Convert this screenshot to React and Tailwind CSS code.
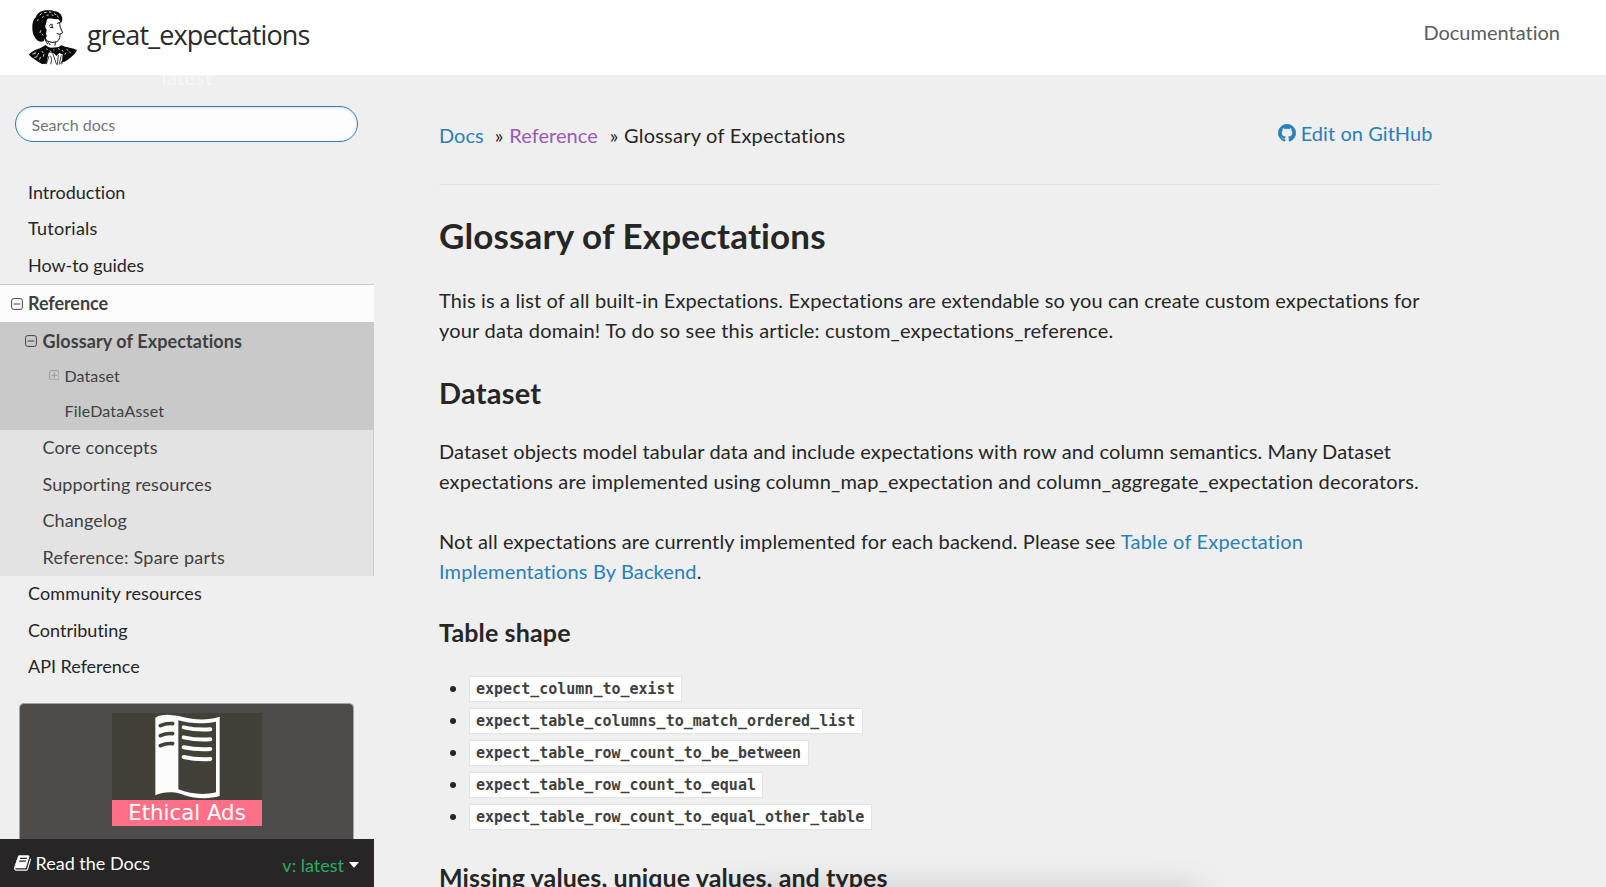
import React from 'react';

const commands = [
  'expect_column_to_exist',
  'expect_table_columns_to_match_ordered_list',
  'expect_table_row_count_to_be_between',
  'expect_table_row_count_to_equal',
  'expect_table_row_count_to_equal_other_table',
];

function Portrait() {
  return (
    <svg viewBox="0 0 210 225" className="h-[75px] w-[70px] shrink-0" aria-hidden="true">
      <path
        fill="#0a0a0a"
        d="M37 84c-1-14 3-26 11-33 3-12 18-20 33-20 9-1 18 0 24 3 11 1 19 8 21 18 2 7 1 13-4 18-1-6-4-10-8-13-9 2-20-2-31-1-4 5-3 11-6 18-3 4-1 10 3 15l-2 13c4 5 2 10-3 13l-4 9-9 1c-8-1-14-6-18-14-5-8-7-17-7-27z"
      />
      <path
        fill="#0a0a0a"
        d="M27 163c9-9 20-15 33-18l17-10c4 4 9 7 15 8l19-1c6-1 9-3 12-6 8 2 13 5 21 6 11 3 20 5 27 8-4 9-11 17-20 23-5 4-11 9-19 13l-6-1 2-22c-4-1-7-2-10-4l-9 9c-5-8-13-11-23-10l-7 33-13 1c-10-5-19-11-28-18-5-3-9-6-11-11z"
      />
      <path
        fill="none"
        stroke="#111"
        strokeWidth="3"
        strokeLinecap="round"
        strokeLinejoin="round"
        d="M74 112l7 11 18 5M119 68c0 8 2 14 4 19l5 11-7 4M111 101l9 2M120 107c-1 7-3 14-9 18l-12 2M88 78c2-4 5-6 9-5M91 82l8 1M96 76l1 7M112 70l6-2M77 104l-1 16 7 12M106 127l-1 9M86 128l4 6"
      />
      <path
        fill="none"
        stroke="#111"
        strokeWidth="2.4"
        d="M79 193l8-25M91 167c5 7 4 16 1 26M98 160l12 34M115 165l-3 29M124 166l-7 28M133 165l-8 28M128 180l-6 11"
      />
      <path
        fill="none"
        stroke="#fff"
        strokeWidth="2.4"
        strokeLinecap="round"
        d="M60 45l4-4M73 38l6-1M88 36l5 1M103 41l5 3M53 62l1-3M62 92l-2 6M66 103l3 2M67 52l3-2M96 45l3 1M112 48l3 3M81 46l4-1M66 154l3 4M80 147l2 1M91 153l2 3M115 146l3 2M127 151l2 3M141 149l2 1M56 160l-4 6M47 156l-2 2M61 172l-2 6M101 150h1M149 156l2 2M38 162l8-2M44 172l7-2M72 163l-2 6M137 159l-2 4"
      />
    </svg>
  );
}

function ToggleIcon({ plus, className }) {
  return (
    <svg viewBox="0 0 12 12" fill="none" stroke="currentColor" className={className} aria-hidden="true">
      <rect x="0.6" y="0.6" width="10.8" height="10.8" rx="2" />
      <path d={plus ? 'M2.6 6h6.8M6 2.6v6.8' : 'M2.7 6h6.6'} />
    </svg>
  );
}

function GithubIcon() {
  return (
    <svg
      viewBox="98 98 1596 1596"
      fill="currentColor"
      stroke="currentColor"
      strokeWidth="60"
      className="h-[18px] w-[18px]"
      aria-hidden="true"
    >
      <path d="M896 128q209 0 385.5 103t279.5 279.5 103 385.5q0 251-146.5 451.5t-378.5 277.5q-27 5-40-7t-13-30q0-3 .5-76.5t.5-134.5q0-97-52-142 57-6 102.5-18t94-39 81-66.5 53-105 20.5-150.5q0-119-79-206 37-91-8-204-28-9-81 11t-92 44l-38 24q-93-26-192-26t-192 26q-16-11-42.5-27t-83.5-38.5-85-13.5q-45 113-8 204-79 87-79 206 0 85 20.5 150t52.5 105 80.5 67 94 39 102.5 18q-39 36-49 103-21 10-45 15t-57 5-65.5-21.5-55.5-62.5q-19-32-48.5-52t-49.5-24l-20-3q-21 0-29 4.5t-5 11.5 9 14 13 12l7 5q22 10 43.5 38t31.5 51l10 23q13 38 44 61.5t67 30 69.5 7 55.5-3.5l23-4q0 38 .5 88.5t.5 54.5q0 18-13 30t-40 7q-232-77-378.5-277.5t-146.5-451.5q0-209 103-385.5t279.5-279.5 385.5-103z" />
    </svg>
  );
}

function BookIcon() {
  return (
    <svg viewBox="64 128 1664 1536" fill="currentColor" className="h-[16px] w-[17px]" aria-hidden="true">
      <path d="M1703 478q40 57 18 129l-275 906q-19 64-76.5 107.5t-122.5 43.5h-923q-77 0-148.5-53.5t-99.5-131.5q-24-67-2-127 0-4 3-27t4-37q1-8-3-21.5t-3-19.5q2-11 8-21t16.5-23.5 16.5-23.5q23-38 45-91.5t30-91.5q3-10 .5-30t-.5-28q3-11 17-28t17-23q21-36 42-92t25-90q1-9-2.5-32t.5-28q4-13 22-30.5t22-22.5q19-26 42.5-84.5t27.5-96.5q1-8-3-25.5t-2-26.5q2-8 9-18t18-23 17-21q8-12 16.5-30.5t15-35 16-36 19.5-32 26.5-23.5 36-11.5 47.5 5.5l-1 3q38-9 51-9h761q74 0 114 56t18 130l-274 906q-36 119-71.5 153.5t-128.5 34.5h-869q-27 0-38 15-11 16-1 43 24 70 144 70h923q29 0 56-15.5t35-41.5l300-987q7-22 5-57 38 15 59 43zm-1064 2q-4 13 2 22.5t20 9.5h608q13 0 25.5-9.5t16.5-22.5l21-64q4-13-2-22.5t-20-9.5h-608q-13 0-25.5 9.5t-16.5 22.5zm-83 256q-4 13 2 22.5t20 9.5h608q13 0 25.5-9.5t16.5-22.5l21-64q4-13-2-22.5t-20-9.5h-608q-13 0-25.5 9.5t-16.5 22.5z" />
    </svg>
  );
}

function AdBook() {
  return (
    <svg viewBox="0 0 450 261" className="h-[87px] w-[150px] bg-[#414138]" aria-hidden="true">
      <path
        fill="#fcfcfc"
        d="M130 14C150 1 180 4 212 12C250 22 290 22 323 11V249C290 259 245 258 205 242C175 234 150 238 130 247Z"
      />
      <path fill="#414138" d="M199 22C235 33 275 33 312 26V238C275 247 235 243 199 229Z" />
      <path
        fill="none"
        stroke="#fcfcfc"
        strokeWidth="12"
        strokeLinecap="round"
        d="M215 43q40 9 80 6M215 73q40 9 80 6M215 103q40 8 80 5M215 132q40 9 80 6"
      />
      <path
        fill="none"
        stroke="#414138"
        strokeWidth="11"
        strokeLinecap="round"
        d="M145 38q18-8 37-6M145 68q18-8 37-6M145 98q18-8 37-6"
      />
    </svg>
  );
}

function NavRow({ children, className = '' }) {
  return <li className={`h-[36.5px] text-[18px] leading-[35px] ${className}`}>{children}</li>;
}

function Sidebar() {
  return (
    <aside className="flex h-full w-[374px] shrink-0 flex-col whitespace-nowrap">
      <div className="h-[31px] overflow-hidden text-center text-[20.5px] leading-[5px] tracking-[0.2px] text-[#f7f7f7]">latest</div>
      <div className="ml-[15px] flex h-[36px] w-[343px] shrink-0 items-center rounded-full border border-[#2980b9] bg-[#fdfdfd] pt-px pl-[15.5px] text-[16px] text-[#757575] shadow-[inset_0_1px_3px_#ddd]">
        Search docs
      </div>
      <nav className="mt-[32.5px] shrink-0 text-[#262626]">
        <ul>
          <NavRow className="pl-7">Introduction</NavRow>
          <NavRow className="pl-7 tracking-[0.27px]">Tutorials</NavRow>
          <NavRow className="pl-7 tracking-[-0.05px]">How-to guides</NavRow>
          <li className="flex h-[38px] items-center border-t border-[#c9c9c9] bg-[#fcfcfc] pl-[10.5px] text-[18px] font-bold text-[#404040]">
            <ToggleIcon className="mr-[5.5px] h-[12px] w-[12px]" />
            <span className="tracking-[-0.07px]">Reference</span>
          </li>
          <li className="bg-[#c9c9c9] text-[#404040]">
            <div className="flex h-[37px] items-center pl-[25px] text-[18px] font-bold">
              <ToggleIcon className="mr-[5.5px] h-[12px] w-[12px]" />
              <span className="pt-[2px] tracking-[0.1px]">Glossary of Expectations</span>
            </div>
            <ul className="pb-px text-[16px] leading-[33px]">
              <li className="flex h-[35px] pl-[48.5px]">
                <ToggleIcon plus className="mt-[10.5px] mr-[5.5px] h-[10.5px] w-[10.5px] text-[#979797]" />
                <span className="tracking-[0.1px]">Dataset</span>
              </li>
              <li className="h-[35px] pl-[64.5px] tracking-[0.2px]">FileDataAsset</li>
            </ul>
          </li>
          <li className="border-r border-[#c9c9c9] bg-[#e3e3e3] text-[#404040]">
            <ul>
              <NavRow className="pl-[42.5px] tracking-[0.15px]">Core concepts</NavRow>
              <NavRow className="pl-[42.5px] tracking-[0.12px]">Supporting resources</NavRow>
              <NavRow className="pl-[42.5px] tracking-[0.1px]">Changelog</NavRow>
              <NavRow className="pl-[42.5px] tracking-[0.24px]">Reference: Spare parts</NavRow>
            </ul>
          </li>
          <NavRow className="pl-7 tracking-[0.12px]">Community resources</NavRow>
          <NavRow className="pl-7">Contributing</NavRow>
          <NavRow className="pl-7 tracking-[-0.02px]">API Reference</NavRow>
        </ul>
      </nav>
      <div className="mt-[17.5px] ml-[19px] flex min-h-0 w-[335px] flex-1 flex-col items-center rounded-t-[5px] border border-b-0 border-[#a3a3a3] bg-[#4d4c4a] pt-[9px]">
        <AdBook />
        <div className="h-[26px] w-[150px] shrink-0 bg-[#ff6f87] pl-px text-center font-['DejaVu_Sans',sans-serif] text-[21.3px] leading-[25px] text-white">
          Ethical Ads
        </div>
      </div>
      <div className="flex h-[48px] shrink-0 items-center justify-between bg-[#272525] pr-[15px] pl-[14px] text-[18px] text-[#fcfcfc]">
        <span className="flex items-center gap-[4.5px]">
          <BookIcon />
          <span>Read the Docs</span>
        </span>
        <span className="flex items-center gap-[5px] text-[#27ae60]">
          <span className="pt-[4px]">v: latest</span>
          <svg viewBox="0 0 10 6" className="mt-[3px] h-[6px] w-[10px] text-[#fcfcfc]" aria-hidden="true">
            <path fill="currentColor" d="M0 0h10L5.6 5.2q-.6.6-1.2 0z" />
          </svg>
        </span>
      </div>
    </aside>
  );
}

function Content() {
  return (
    <main className="w-[1000px] shrink-0 pt-[44.5px] text-[20px] leading-[30px] whitespace-nowrap text-[#262626]">
      <div className="flex justify-between">
        <div className="flex">
          <a className="text-[#2980b9]">Docs</a>
          <span className="ml-[11px]">»</span>
          <a className="ml-[6px] tracking-[0.06px] text-[#9b59b6]">Reference</a>
          <span className="ml-[12px]">»</span>
          <span className="ml-[5.5px] tracking-[0.23px]">Glossary of Expectations</span>
        </div>
        <a className="mr-[6.5px] flex h-[30px] items-center gap-[5px] pb-[3px] text-[#2980b9]">
          <GithubIcon />
          <span className="tracking-[0.06px]">Edit on GitHub</span>
        </a>
      </div>
      <hr className="mt-[34px] border-[#e1e4e5]" />
      <h1 className="mt-[30px] text-[35px] leading-[40px] font-bold tracking-[0.14px]">Glossary of Expectations</h1>
      <p className="mt-[30.5px]">
        <span className="tracking-[0.138px]">
          This is a list of all built-in Expectations. Expectations are extendable so you can create custom expectations for
        </span>
        <br />
        <span className="tracking-[0.2px]">your data domain! To do so see this article: custom_expectations_reference.</span>
      </p>
      <h2 className="mt-[28px] text-[29px] leading-[40px] font-bold tracking-[0.25px]">Dataset</h2>
      <p className="mt-[23px]">
        <span className="tracking-[0.11px]">
          Dataset objects model tabular data and include expectations with row and column semantics. Many Dataset
        </span>
        <br />
        <span className="tracking-[0.18px]">
          expectations are implemented using column_map_expectation and column_aggregate_expectation decorators.
        </span>
      </p>
      <p className="mt-[30px]">
        <span className="tracking-[0.14px]">Not all expectations are currently implemented for each backend. Please see </span>
        <a className="tracking-[0.2px] text-[#2980b9]">Table of Expectation</a>
        <br />
        <a className="tracking-[0.14px] text-[#2980b9]">Implementations By Backend</a>.
      </p>
      <h3 className="mt-[30.5px] text-[25px] leading-[30px] font-bold tracking-[0.14px]">Table shape</h3>
      <ul className="mt-[26px]">
        {commands.map((name) => (
          <li key={name} className="flex h-[32px] items-center">
            <span className="ml-[11px] h-[6px] w-[6px] rounded-full bg-[#262626]" />
            <code className="ml-[13px] h-[26px] border border-[#e1e4e5] bg-white pr-[6.5px] pl-[6px] font-['DejaVu_Sans_Mono',monospace] text-[15px] leading-[24px] font-bold text-[#404040]">
              {name}
            </code>
          </li>
        ))}
      </ul>
      <h3 className="mt-[29px] text-[25px] leading-[30px] font-bold tracking-[0.09px]">
        Missing values, unique values, and types
      </h3>
    </main>
  );
}

export default function App() {
  return (
    <div className="relative flex h-[887px] w-[1606px] flex-col overflow-hidden bg-[#efefef] font-['Lato',sans-serif] [font-variant-ligatures:none]">
      <header className="flex h-[75px] shrink-0 items-center justify-between bg-white pr-[46px] pl-[20px]">
        <div className="flex items-center">
          <Portrait />
          <span className="-ml-[3px] pb-[5px] font-['Open_Sans',sans-serif] text-[27px] tracking-[-0.86px] text-[#2a2a2a]">
            great_expectations
          </span>
        </div>
        <span className="pb-[11px] text-[20px] text-[#5c5c5c]">Documentation</span>
      </header>
      <div className="flex h-[812px] gap-[65px]">
        <Sidebar />
        <Content />
      </div>
      <div className="absolute top-[893px] left-[725px] h-[30px] w-[470px] shadow-[0_0_36px_rgba(0,0,0,0.22)]" />
    </div>
  );
}
